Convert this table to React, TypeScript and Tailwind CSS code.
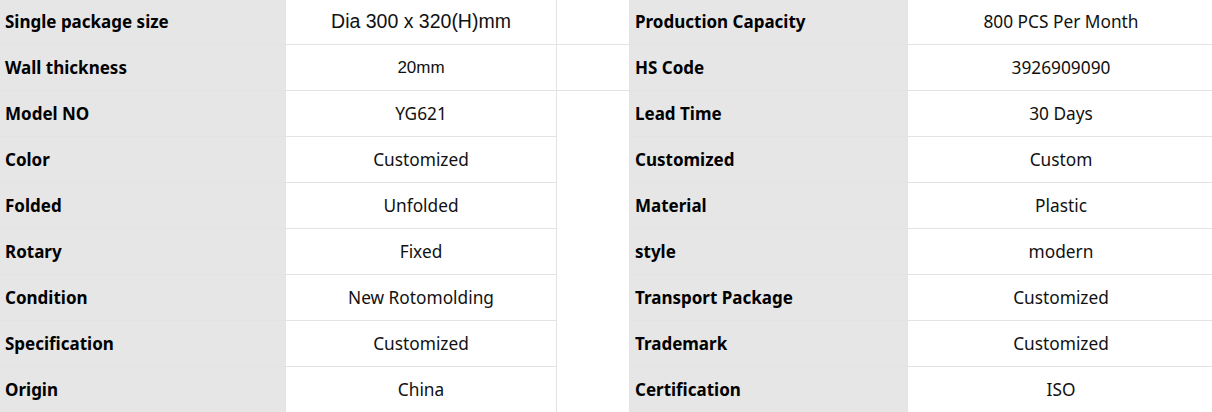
import React from "react";

type Row = {
  label: string;
  value: string;
  label2: string;
  value2: string;
  arial?: string;
};

const rows: Row[] = [
  { label: "Single package size", value: "Dia 300 x 320(H)mm", label2: "Production Capacity", value2: "800 PCS Per Month", arial: "text-[19.5px]" },
  { label: "Wall thickness", value: "20mm", label2: "HS Code", value2: "3926909090", arial: "text-[17px]" },
  { label: "Model NO", value: "YG621", label2: "Lead Time", value2: "30 Days" },
  { label: "Color", value: "Customized", label2: "Customized", value2: "Custom" },
  { label: "Folded", value: "Unfolded", label2: "Material", value2: "Plastic" },
  { label: "Rotary", value: "Fixed", label2: "style", value2: "modern" },
  { label: "Condition", value: "New Rotomolding", label2: "Transport Package", value2: "Customized" },
  { label: "Specification", value: "Customized", label2: "Trademark", value2: "Customized" },
  { label: "Origin", value: "China", label2: "Certification", value2: "ISO" },
];

const cell = "border border-[#e3e3e3] h-[46px] p-0";
const labelCell = `${cell} bg-[#e6e6e6] text-left pl-[5px] font-bold text-[17px] text-black`;
const valueBase = `${cell} bg-white text-center text-[#111]`;
const valueCell = `${valueBase} text-[17.3px]`;

const App: React.FC = () => {
  return (
    <div className="w-[1212px] h-[412px] overflow-hidden bg-white font-['Noto_Sans',sans-serif]">
      <table className="-mt-[2px] -ml-px w-[1215px] border-collapse table-fixed">
        <colgroup>
          <col className="w-[286px]" />
          <col className="w-[271px]" />
          <col className="w-[73px]" />
          <col className="w-[278px]" />
          <col className="w-[307px]" />
        </colgroup>
        <tbody>
          {rows.map((r, i) => (
            <tr key={r.label}>
              <td className={labelCell}>{r.label}</td>
              <td
                className={
                  r.arial
                    ? `${valueBase} font-['Liberation_Sans',Arial,sans-serif] ${r.arial}`
                    : valueCell
                }
              >
                {r.value}
              </td>
              {i < 2 && <td className={`${cell} bg-white`} />}
              {i === 2 && <td rowSpan={7} className={`${cell} bg-white`} />}
              <td className={labelCell}>{r.label2}</td>
              <td className={valueCell}>{r.value2}</td>
            </tr>
          ))}
        </tbody>
      </table>
    </div>
  );
};

export default App;
